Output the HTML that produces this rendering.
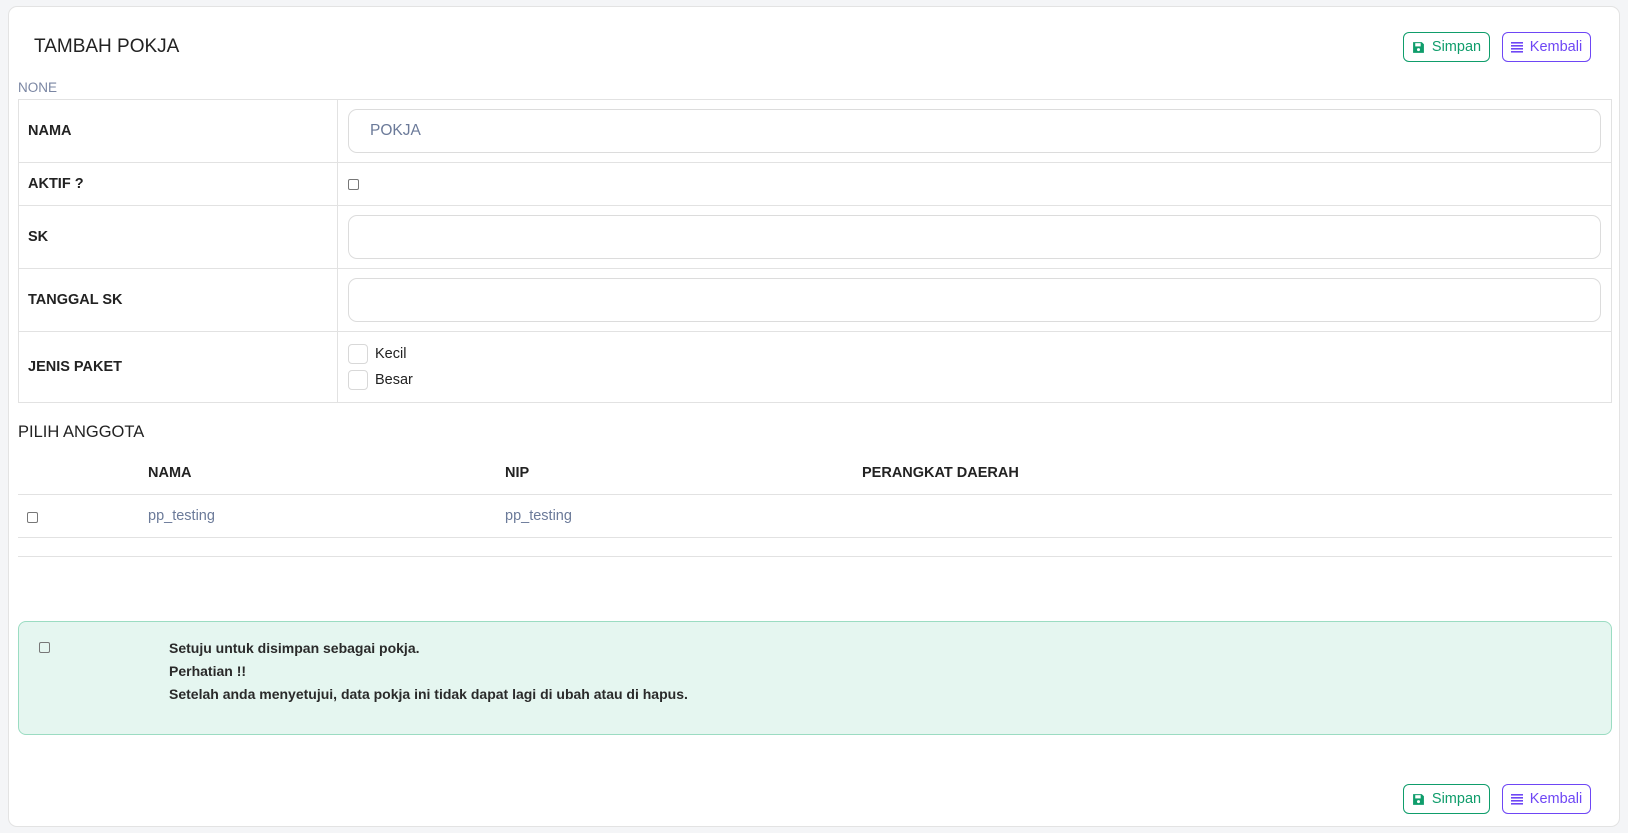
<!DOCTYPE html>
<html><head><style>
*{box-sizing:border-box}
body{margin:0;width:1628px;height:833px;background:#f4f5f7;font-family:"Liberation Sans",sans-serif;color:#222;position:relative;overflow:hidden}
.card{position:absolute;left:8px;top:6px;width:1612px;height:821px;background:#fff;border:1px solid #e3e3e3;border-radius:9px}
.abs{position:absolute}
.btn{position:absolute;height:30px;border:1px solid;border-radius:6px;font-size:14.5px;display:flex;align-items:center;justify-content:center;gap:7px;background:#fff}
.s{border-color:#0f9d6b;color:#0f9d6b;width:87px}
.k{border-color:#6e46f5;color:#6e46f5;width:89px}
table.f{position:absolute;left:18px;top:99px;width:1594px;border-collapse:collapse}
table.f td{border:1px solid #e2e2e2;font-size:14.5px;font-weight:bold;padding:0 9px}
table.f td.v{font-weight:normal;padding:0 10px}
.inp{height:44px;border:1px solid #dcdcdc;border-radius:9px;font-size:15.5px;color:#6b7a99;padding:0 21px;display:flex;align-items:center}
.cb{display:inline-block;width:11px;height:11px;border:1px solid #777;border-radius:2px;vertical-align:middle}
.cb2{display:inline-block;width:20px;height:20px;border:1px solid #d8d8d8;border-radius:4px;vertical-align:middle;margin-right:7px}
.hl{position:absolute;left:18px;width:1594px;height:1px;background:#e2e2e2}
</style></head><body>
<div class="card"></div>
<div class="abs" style="left:34px;top:36px;font-size:19px">TAMBAH POKJA</div>
<div class="btn s" style="left:1403px;top:32px"><svg width="13" height="13" viewBox="0 0 12 12"><path d="M1 1h8l2 2v8H1z" fill="#0f9d6b"/><rect x="3" y="2" width="5" height="3" fill="#fff"/><circle cx="6" cy="8" r="1.4" fill="#fff"/></svg>Simpan</div>
<div class="btn k" style="left:1502px;top:32px"><svg width="12" height="12" viewBox="0 0 12 12" fill="#6e46f5"><rect x="0" y="1" width="12" height="1.6"/><rect x="0" y="4" width="12" height="1.6"/><rect x="0" y="7" width="12" height="1.6"/><rect x="0" y="10" width="12" height="1.6"/></svg>Kembali</div>
<div class="abs" style="left:18px;top:80px;font-size:13.5px;color:#7a86a3">NONE</div>
<table class="f">
<tr style="height:63px"><td style="width:319px">NAMA</td><td class="v"><div class="inp">POKJA</div></td></tr>
<tr style="height:43px"><td>AKTIF ?</td><td class="v"><span class="cb"></span></td></tr>
<tr style="height:63px"><td>SK</td><td class="v"><div class="inp"></div></td></tr>
<tr style="height:63px"><td>TANGGAL SK</td><td class="v"><div class="inp"></div></td></tr>
<tr style="height:71px"><td>JENIS PAKET</td><td class="v" style="font-size:14.5px;line-height:26px"><div><span class="cb2"></span>Kecil</div><div><span class="cb2"></span>Besar</div></td></tr>
</table>
<div class="abs" style="left:18px;top:423px;font-size:16.5px">PILIH ANGGOTA</div>
<div class="abs" style="left:148px;top:465px;font-size:14.5px;font-weight:bold">NAMA</div>
<div class="abs" style="left:505px;top:465px;font-size:14.5px;font-weight:bold">NIP</div>
<div class="abs" style="left:862px;top:465px;font-size:14.5px;font-weight:bold">PERANGKAT DAERAH</div>
<div class="hl" style="top:494px"></div>
<div class="abs" style="left:27px;top:509px"><span class="cb"></span></div>
<div class="abs" style="left:148px;top:508px;font-size:14.5px;color:#6b7a99">pp_testing</div>
<div class="abs" style="left:505px;top:508px;font-size:14.5px;color:#6b7a99">pp_testing</div>
<div class="hl" style="top:537px"></div>
<div class="hl" style="top:556px"></div>
<div class="abs" style="left:18px;top:621px;width:1594px;height:114px;background:#e5f6f0;border:1px solid #9bdcc2;border-radius:8px"></div>
<div class="abs" style="left:39px;top:639px"><span class="cb"></span></div>
<div class="abs" style="left:169px;top:637px;font-size:14px;font-weight:bold;line-height:23px;color:#2a2a2a">Setuju untuk disimpan sebagai pokja.<br>Perhatian !!<br>Setelah anda menyetujui, data pokja ini tidak dapat lagi di ubah atau di hapus.</div>
<div class="btn s" style="left:1403px;top:784px"><svg width="13" height="13" viewBox="0 0 12 12"><path d="M1 1h8l2 2v8H1z" fill="#0f9d6b"/><rect x="3" y="2" width="5" height="3" fill="#fff"/><circle cx="6" cy="8" r="1.4" fill="#fff"/></svg>Simpan</div>
<div class="btn k" style="left:1502px;top:784px"><svg width="12" height="12" viewBox="0 0 12 12" fill="#6e46f5"><rect x="0" y="1" width="12" height="1.6"/><rect x="0" y="4" width="12" height="1.6"/><rect x="0" y="7" width="12" height="1.6"/><rect x="0" y="10" width="12" height="1.6"/></svg>Kembali</div>
</body></html>
